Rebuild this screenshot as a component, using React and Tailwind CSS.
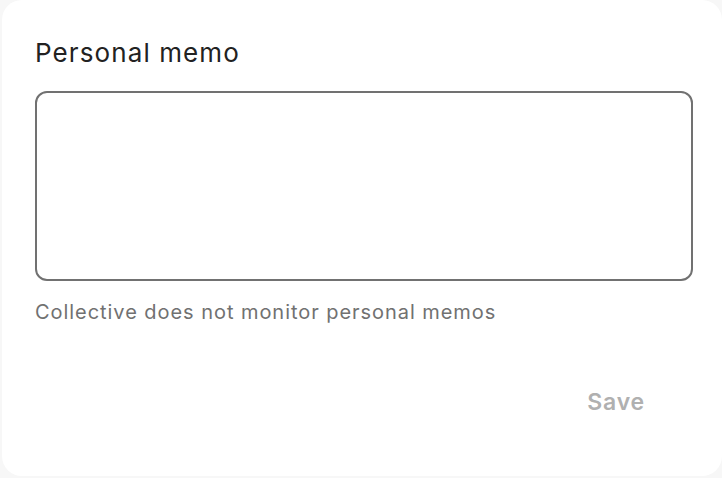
import React, { useState } from "react";

export default function App() {
  const [memo, setMemo] = useState("");

  return (
    <div
      className="h-[478px] w-[722px] bg-[#f7f7f7] pl-[2px] pb-[2px]"
      style={{ fontFamily: "Inter, 'Noto Sans', sans-serif" }}
    >
      <div className="flex h-full flex-col rounded-[20px] bg-white px-[33px] pt-[38px]">
        <h2 className="text-[26px] leading-[30px] font-normal tracking-[1.1px] text-[#222222]">Personal memo</h2>
        <textarea
          value={memo}
          onChange={(e) => setMemo(e.target.value)}
          className="mt-[23px] h-[190px] w-[658px] resize-none rounded-[12px] border-2 border-[#717171] px-3 py-2 text-[16px] outline-none"
        />
        <p className="mt-[19px] text-[20px] leading-[24px] tracking-[0.95px] text-[#717171]">
          Collective does not monitor personal memos
        </p>
        <div className="mt-[64px] flex justify-end pr-[44px]">
          <button className="text-[23px] font-semibold leading-[28px] tracking-[0.8px] text-[#b0b0b0]">Save</button>
        </div>
      </div>
    </div>
  );
}
